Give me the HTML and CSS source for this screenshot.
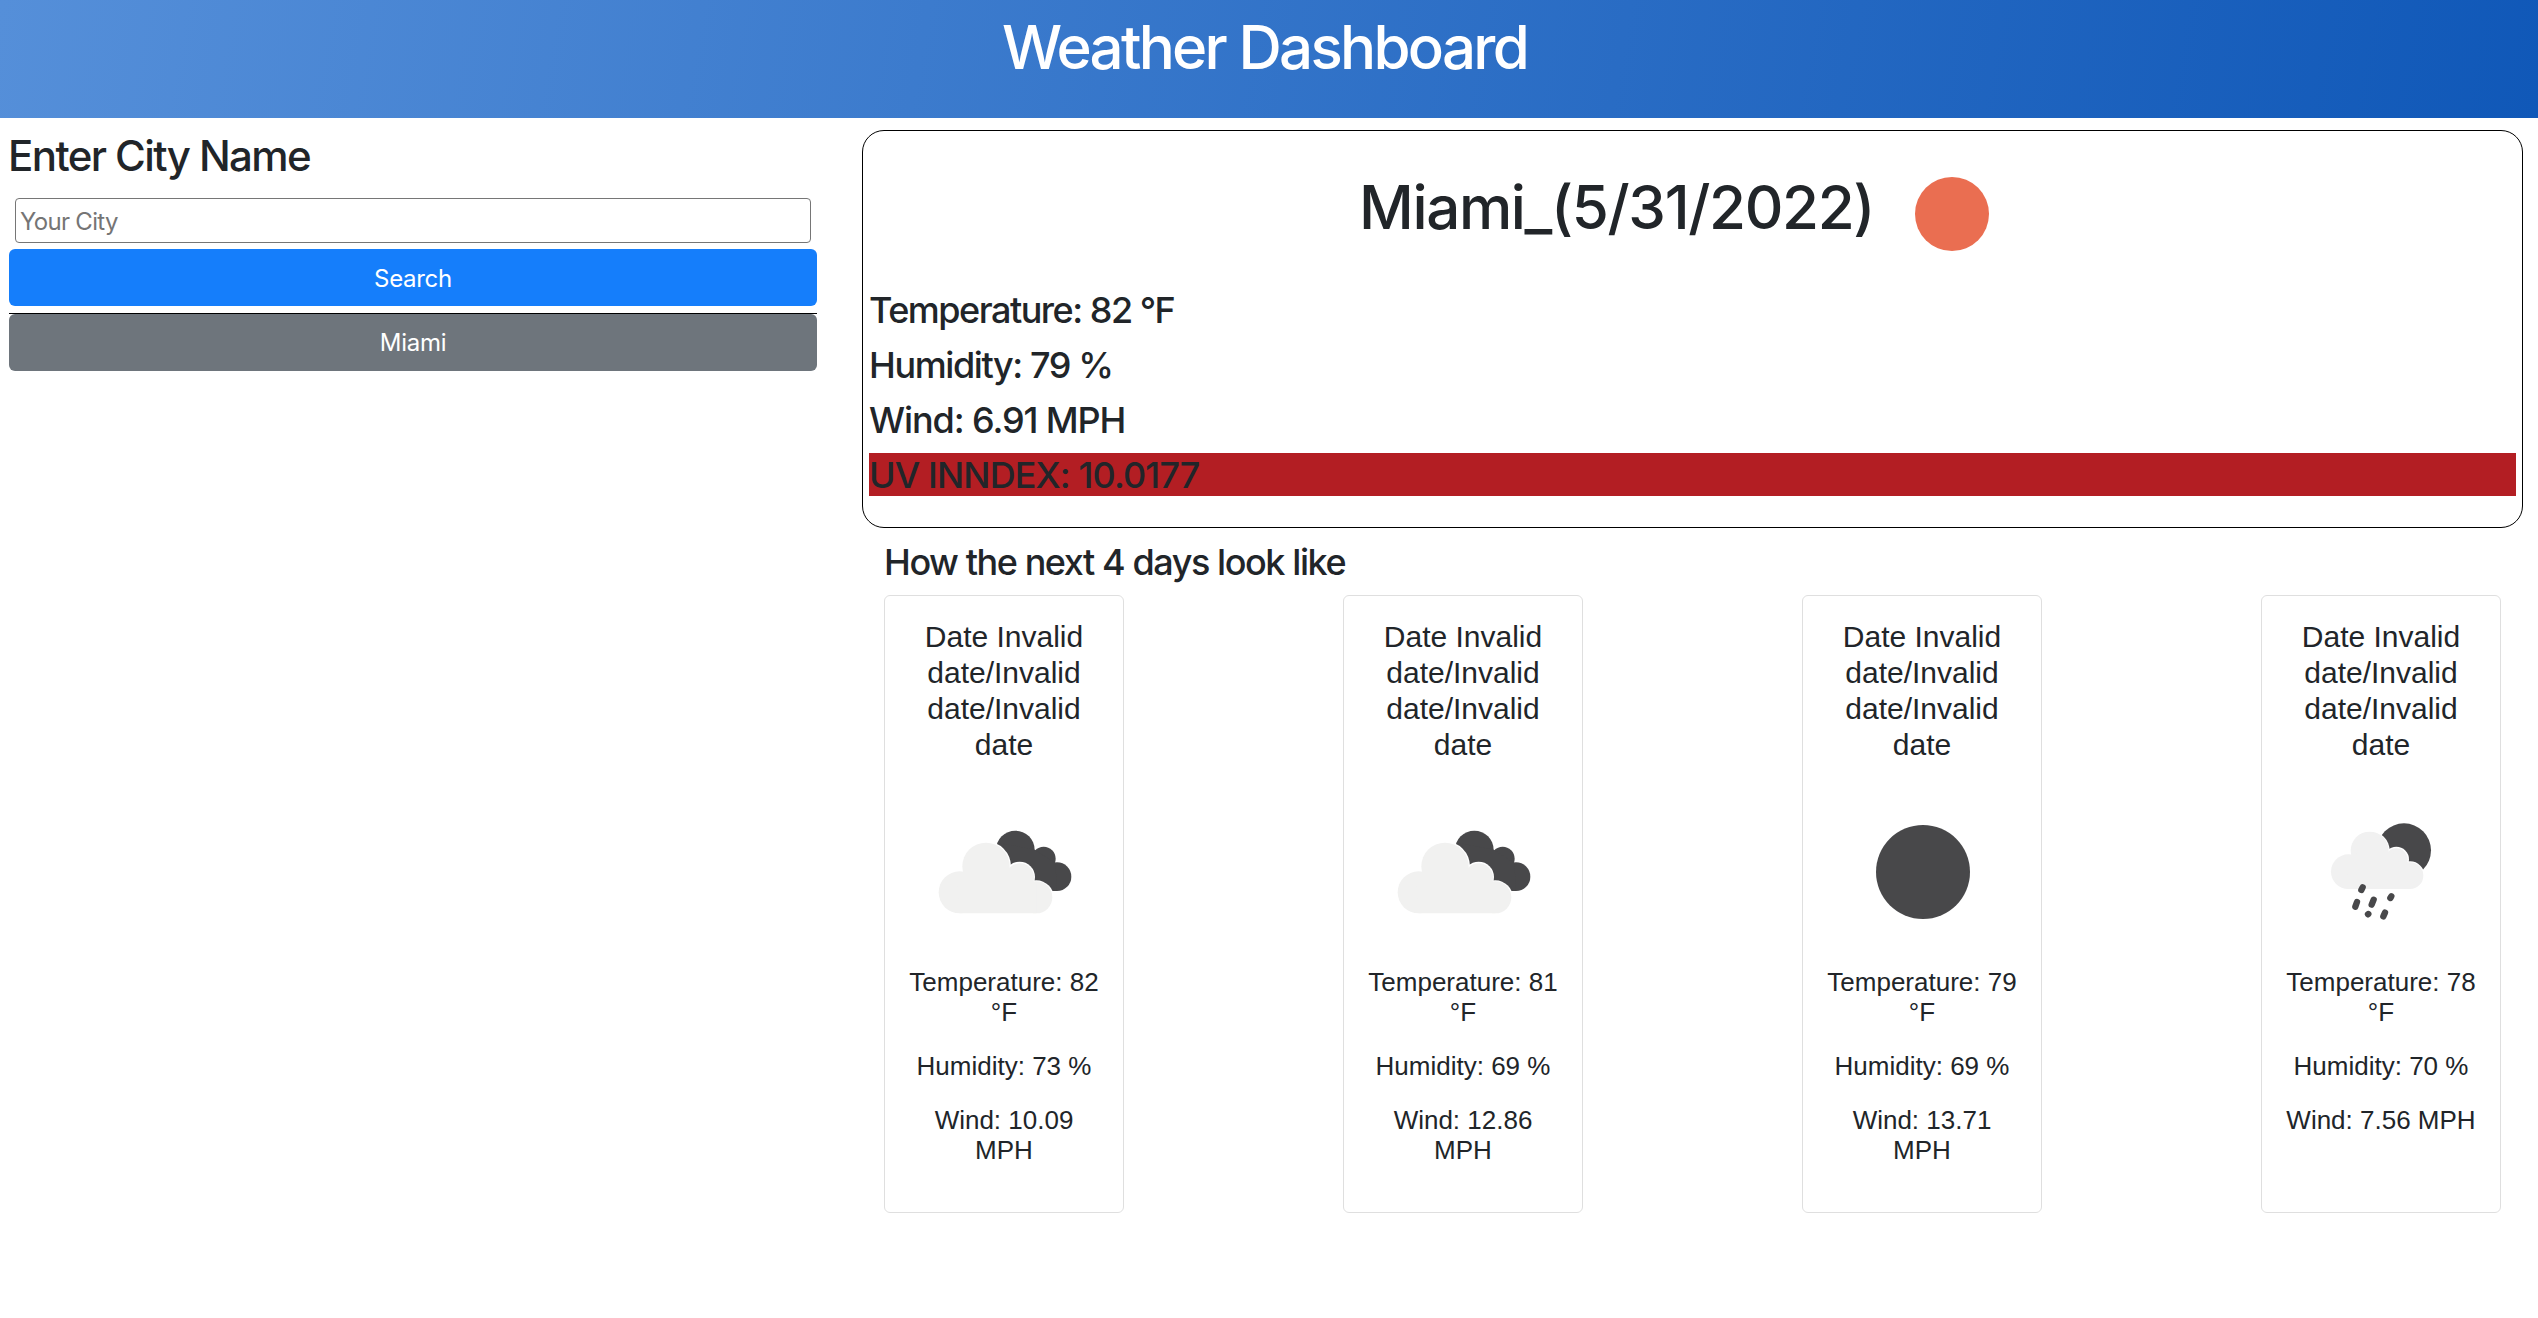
FILE: index.html
```
<!DOCTYPE html>
<html lang="en">
<head>
<meta charset="utf-8">
<title>Weather Dashboard</title>
<link rel="stylesheet" href="styles.css">
</head>
<body>
<header class="banner"><h1>Weather Dashboard</h1></header>
<main class="layout">
  <section class="search">
    <h2>Enter City Name</h2>
    <input class="city-input" type="text" placeholder="Your City">
    <button class="btn btn-primary">Search</button>
    <div class="history"><button class="btn btn-secondary">Miami</button></div>
  </section>
  <section class="results">
    <div class="current">
      <div class="current-title">
        <h1>Miami_(5/31/2022)</h1>
        <svg class="sun" viewBox="0 0 74 74"><circle cx="37" cy="37" r="37" fill="#ea6e51"/></svg>
      </div>
      <h3 class="temp">Temperature: 82 °F</h3>
      <h3 class="hum">Humidity: 79 %</h3>
      <h3 class="wind">Wind: 6.91 MPH</h3>
      <h3 class="uv">UV INNDEX: 10.0177</h3>
    </div>
    <h3 class="forecast-title">How the next 4 days look like</h3>
    <div class="forecast">
      <article class="card">
        <h5>Date Invalid date/Invalid date/Invalid date</h5>
        <svg class="icon" viewBox="177 50 450 450">
          <g fill="#48484a"><circle cx="436" cy="209" r="58"/><circle cx="521" cy="235" r="36"/><circle cx="561" cy="289" r="43"/><path d="M400 190L494 208L556 248L561 332H545L450 300L400 240z"/></g>
          <g fill="#fff"><circle cx="348" cy="258" r="75"/><circle cx="449" cy="290" r="46"/><circle cx="499" cy="353" r="53"/></g>
          <g fill="#f1f1f0"><circle cx="269" cy="336" r="63"/><circle cx="348" cy="258" r="71"/><circle cx="449" cy="292" r="43"/><circle cx="499" cy="351" r="48"/><path d="M269 399h230v-90l-60-40H300l-40 20z"/></g>
        </svg>
        <p>Temperature: 82 °F</p><p>Humidity: 73 %</p><p>Wind: 10.09 MPH</p>
      </article>
      <article class="card">
        <h5>Date Invalid date/Invalid date/Invalid date</h5>
        <svg class="icon" viewBox="177 50 450 450">
          <g fill="#48484a"><circle cx="436" cy="209" r="58"/><circle cx="521" cy="235" r="36"/><circle cx="561" cy="289" r="43"/><path d="M400 190L494 208L556 248L561 332H545L450 300L400 240z"/></g>
          <g fill="#fff"><circle cx="348" cy="258" r="75"/><circle cx="449" cy="290" r="46"/><circle cx="499" cy="353" r="53"/></g>
          <g fill="#f1f1f0"><circle cx="269" cy="336" r="63"/><circle cx="348" cy="258" r="71"/><circle cx="449" cy="292" r="43"/><circle cx="499" cy="351" r="48"/><path d="M269 399h230v-90l-60-40H300l-40 20z"/></g>
        </svg>
        <p>Temperature: 81 °F</p><p>Humidity: 69 %</p><p>Wind: 12.86 MPH</p>
      </article>
      <article class="card">
        <h5>Date Invalid date/Invalid date/Invalid date</h5>
        <svg class="icon" viewBox="201 50 450 450"><circle cx="429" cy="275" r="141" fill="#48484a"/></svg>
        <p>Temperature: 79 °F</p><p>Humidity: 69 %</p><p>Wind: 13.71 MPH</p>
      </article>
      <article class="card">
        <h5>Date Invalid date/Invalid date/Invalid date</h5>
        <svg class="icon" viewBox="168 50 450 450">
          <circle cx="462" cy="210" r="81" fill="#48484a"/>
          <g fill="#fff"><circle cx="359" cy="212" r="60"/><circle cx="439" cy="237" r="38"/><circle cx="480" cy="287" r="44"/></g>
          <g fill="#f1f1f1"><circle cx="295" cy="274" r="52"/><circle cx="359" cy="211" r="57"/><circle cx="439" cy="238" r="34"/><circle cx="480" cy="286" r="40"/><path d="M295 326h185v-76l-50-30H320l-30 20z"/></g>
          <path d="M338 321l-4 8M321 365l-5 14M371 358l-6 15M424 348l-3 5M355 401l-1 1M405 397l-5 11" stroke="#48484a" stroke-width="19" stroke-linecap="round"/>
        </svg>
        <p>Temperature: 78 °F</p><p>Humidity: 70 %</p><p>Wind: 7.56 MPH</p>
      </article>
    </div>
  </section>
</main>
</body>
</html>
```
FILE: styles.css
```
* { box-sizing: border-box; }
body { margin: 0; background: #fff; color: #212529; font: 400 24px/36px Inter, "Liberation Sans", sans-serif; }
h1, h2, h3, h5, p { margin: 0; font-weight: 500; }
.banner { height: 118px; padding: 11px 9px 0 0; text-align: center; color: #fff; background: linear-gradient(100deg, #558fd9, #1058b8); }
h1 { font-size: 60px; line-height: 72px; white-space: nowrap; }
.banner h1 { letter-spacing: -2.7px; }
.layout { display: flex; align-items: flex-start; }
.search { display: flex; flex-direction: column; width: 826px; padding: 12px 9px 0; }
h2 { font-size: 42px; line-height: 50px; margin-top: 1px; letter-spacing: -1.6px; text-indent: -1px; }
.city-input { height: 45px; margin: 17px 6px 6px; padding: 3px 4px 1px; border: 1px solid #767676; border-radius: 4px; font: inherit; letter-spacing: -0.7px; background: #fff; }
.city-input::placeholder { color: #757575; }
.btn { display: block; width: 100%; height: 57px; padding: 1px 0 0; border: 0; border-radius: 6px; color: #fff; font: inherit; letter-spacing: -0.3px; }
.btn-primary { padding-top: 2px; background: #157efb; }
.btn-secondary { background: #6e757c; }
.history { margin-top: 7px; border-top: 1px solid #000; }
.results { flex: 1; padding: 12px 15px 0 36px; }
.current { height: 398px; padding: 0 6px; border: 1px solid #000; border-radius: 22px; }
.current-title { display: flex; padding: 40px 0 0 490px; height: 157px; }
.current-title h1 { width: 556px; letter-spacing: -1.35px; }
.sun { width: 74px; height: 74px; margin-top: 6px; }
h3 { font-size: 36px; line-height: 43px; }
.current h3 { margin-bottom: 12px; padding-top: 2px; line-height: 41px; }
.temp, .hum { letter-spacing: -1.5px; }
.hum { letter-spacing: -1.4px; }
.wind { letter-spacing: -1.1px; }
.uv { letter-spacing: -0.9px; background: #b31e23; }
.forecast-title { margin: 13px 0 11px 22px; letter-spacing: -1.43px; }
.forecast { display: flex; justify-content: space-between; padding: 0 22px; }
.card { display: flex; flex-direction: column; align-items: center; width: 240px; height: 618px; padding: 23px 22px 0; border: 1px solid #dfdfdf; border-radius: 6px; text-align: center; font-family: "Liberation Sans", Arial, sans-serif; }
.card h5 { font-size: 30px; line-height: 36px; font-weight: 400; }
.icon { width: 150px; height: 150px; margin: 34px 0 20px; flex: none; }
.card p { font-size: 26px; line-height: 30px; font-weight: 400; margin-bottom: 24px; }
```
